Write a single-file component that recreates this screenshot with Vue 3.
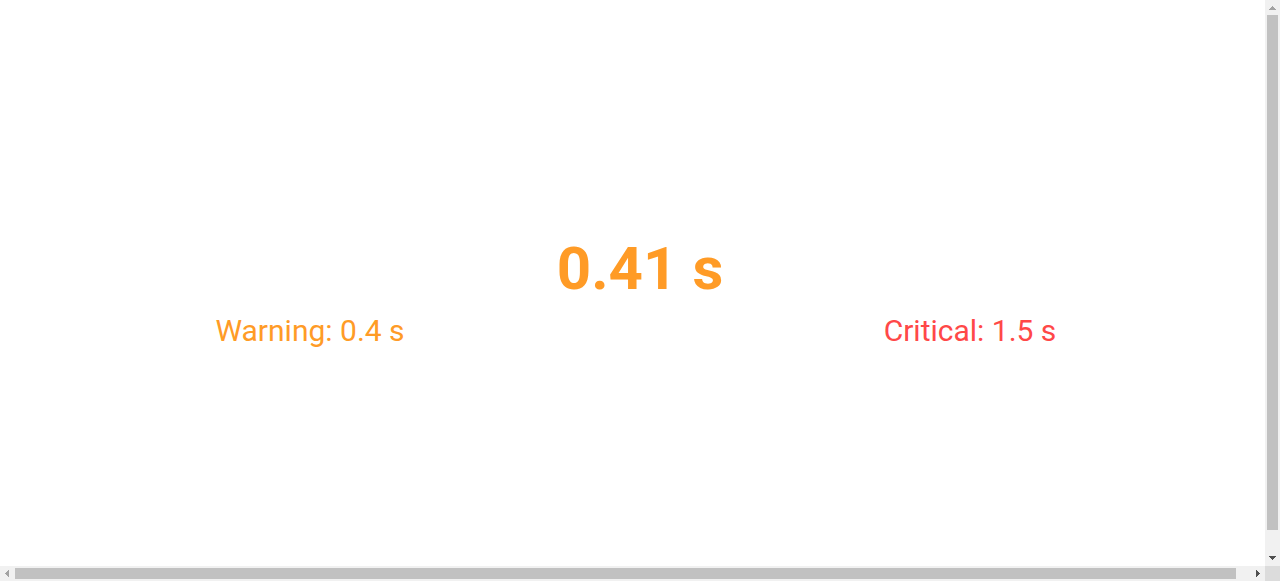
<script setup>
import { ref } from 'vue'

const reading = '0.41 s'
const thresholds = [
  { level: 'warning', label: 'Warning', value: '0.4 s' },
  { level: 'critical', label: 'Critical', value: '1.5 s' },
]

const scroller = ref(null)
const scroll = (x, y) => scroller.value.scrollBy(x, y)
</script>

<template>
  <div class="window">
    <main ref="scroller" class="viewport">
      <div class="panel">
        <div class="reading">{{ reading }}</div>
        <div class="thresholds">
          <div v-for="t in thresholds" :key="t.level" :class="['threshold', t.level]">
            {{ t.label }}: {{ t.value }}
          </div>
        </div>
      </div>
    </main>

    <div class="bar vertical">
      <button class="arrow at-end" type="button" aria-label="Scroll up" @click="scroll(0, -40)">
        <svg viewBox="0 0 15 15"><path d="M7 6h1v1h1v1h1v1h1v1H4V9h1V8h1V7h1z" /></svg>
      </button>
      <div class="track"><div class="thumb"></div></div>
      <button class="arrow" type="button" aria-label="Scroll down" @click="scroll(0, 40)">
        <svg viewBox="0 0 15 15"><path d="M4 5h7v1h-1v1H9v1H8v1H7V8H6V7H5V6H4z" /></svg>
      </button>
    </div>

    <div class="bar horizontal">
      <button class="arrow at-end" type="button" aria-label="Scroll left" @click="scroll(-40, 0)">
        <svg viewBox="0 0 15 15"><path d="M9 4v7H8v-1H7V9H6V8H5V7h1V6h1V5h1V4z" /></svg>
      </button>
      <div class="track"><div class="thumb"></div></div>
      <button class="arrow" type="button" aria-label="Scroll right" @click="scroll(40, 0)">
        <svg viewBox="0 0 15 15"><path d="M6 4h1v1h1v1h1v1h1v1H9v1H8v1H7v1H6z" /></svg>
      </button>
    </div>

    <div class="corner"></div>
  </div>
</template>

<style>
body {
  margin: 0;
  background: #fff;
}
</style>

<style scoped>
.window {
  display: grid;
  grid-template-columns: minmax(0, 1fr) 15px;
  grid-template-rows: minmax(0, 1fr) 15px;
  height: 100vh;
  font-family: Roboto, "Liberation Sans", sans-serif;
}

.viewport {
  overflow: auto;
  scrollbar-width: none;
}

.panel {
  width: 100vw;
  height: calc(100vh + 4px);
  display: flex;
  flex-direction: column;
  justify-content: center;
  text-align: center;
}

.reading {
  color: #ff9b26;
  font-size: 60px;
  font-weight: 700;
  line-height: 70px;
}

.thresholds {
  display: flex;
  gap: 40px;
  margin-top: 7px;
  font-size: 30px;
  line-height: 40px;
}

.threshold {
  flex: 1;
}

.warning {
  color: #ff9b26;
}

.critical {
  color: #ff4848;
}

.bar {
  display: flex;
  background: #f1f1f1;
}

.vertical {
  flex-direction: column;
}

.track {
  flex: 1;
}

.thumb {
  background: #c1c1c1;
}

.vertical .thumb {
  height: 96%;
  margin: 0 2px;
}

.horizontal .track {
  padding: 2px 0;
}

.horizontal .thumb {
  width: 98.9%;
  height: 100%;
}

.arrow {
  flex: none;
  width: 15px;
  height: 15px;
  padding: 0;
  border: 0;
  background: none;
  color: #505050;
}

.arrow.at-end {
  color: #a3a3a3;
}

.arrow svg {
  display: block;
  width: 15px;
  height: 15px;
  fill: currentColor;
}

.corner {
  background: #dcdcdc;
}
</style>
